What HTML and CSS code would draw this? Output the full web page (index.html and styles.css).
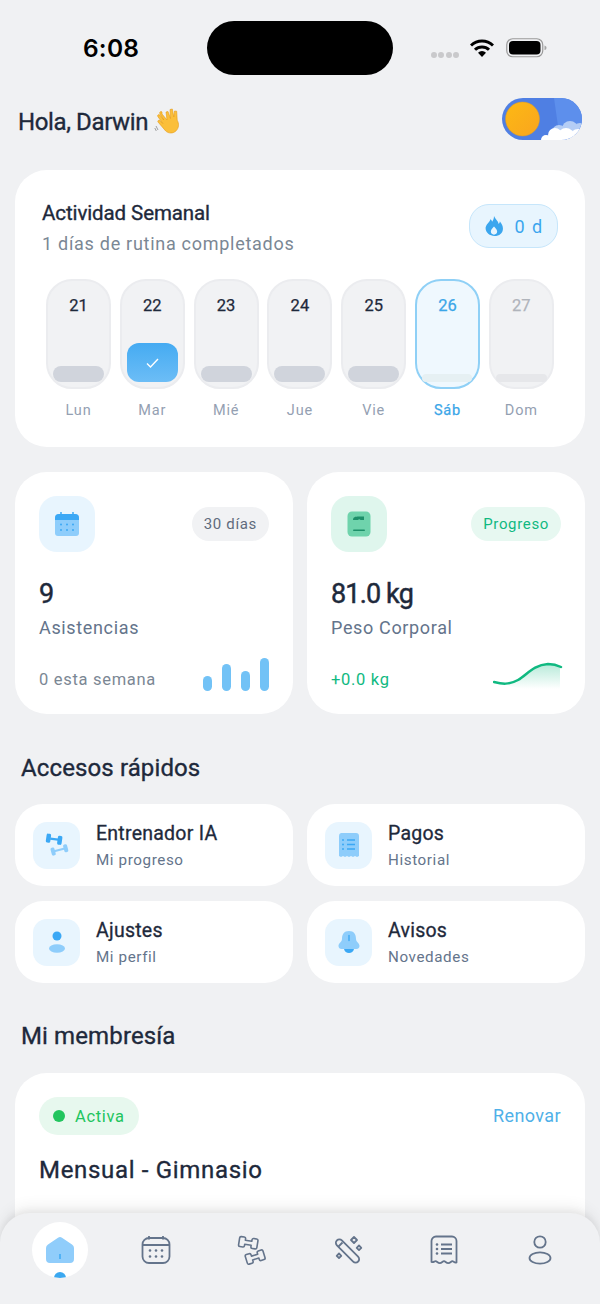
FILE: index.html
```html
<!DOCTYPE html>
<html lang="es">
<head>
<meta charset="utf-8">
<title>Inicio</title>
<link rel="stylesheet" href="styles.css">
</head>
<body>
<div class="screen">
  <div class="island"></div>
  <div class="status">
    <span class="time">6:08</span>
    <div class="status-right">
      <div class="signal"><i></i><i></i><i></i><i></i></div>
      <svg class="wifi" width="24" height="18" viewBox="0 0 24 18"><path d="M1 6.500a16 16 0 0 1 22 0" fill="none" stroke="#000" stroke-width="3"/><path d="M5 10.800a10 10 0 0 1 14 0" fill="none" stroke="#000" stroke-width="3"/><path d="M12 18l-4-4.300a5.800 5.800 0 0 1 8 0z" fill="#000"/></svg>
      <svg class="battery" width="41" height="20" viewBox="0 0 41 20"><rect x=".75" y=".75" width="36" height="18" rx="6" fill="none" stroke="#9a9a9a" stroke-width="1.200"/><rect x="3" y="3" width="31.500" height="13.500" rx="4" fill="#000"/><path d="M38.500 7.500c1.500.4 2 1.300 2 2.300s-.5 1.900-2 2.300z" fill="#a5a5a5"/></svg>
    </div>
  </div>

  <header class="top">
    <h1 class="hello">Hola, Darwin
      <svg class="wave" width="27" height="27" viewBox="0 0 27 27"><path d="M8 7l5 6-1-8 2-.5 2.500 7L16 2.500l2.300-.5 1.500 8 .7-6 2.200.2.500 9c2 3.500 1.800 7.500-1 10.500-3 3-7.500 3-10.500.3L4 15c-.7-1 .7-2.400 1.800-1.500l3 3-5-7c-.8-1.200 1-2.600 2-1.500l4 5-4-6.500C5.200 5 7 3.800 8 5z" fill="#fbbf3a" stroke="#e49a18" stroke-width=".6"/><path d="M2 19l2 4M.8 21l1.500 3" stroke="#8a8a8a" stroke-width=".8"/></svg>
    </h1>
    <svg class="toggle" width="80" height="42" viewBox="0 0 80 42">
      <defs>
        <clipPath id="tc"><rect width="80" height="42" rx="21"/></clipPath>
        <linearGradient id="sun" x1="0" y1="0" x2="1" y2="1"><stop offset="0" stop-color="#fdb913"/><stop offset="1" stop-color="#f9a51f"/></linearGradient>
      </defs>
      <g clip-path="url(#tc)">
        <rect width="80" height="42" fill="#4f7fe3"/>
        <path d="M52 0h28v42H58z" fill="#5d8fec"/>
        <circle cx="57" cy="34" r="7" fill="#b4cdf5"/>
        <circle cx="68" cy="31" r="8" fill="#b4cdf5"/>
        <circle cx="78" cy="32" r="7" fill="#b4cdf5"/>
        <circle cx="44" cy="42" r="5" fill="#fff"/>
        <circle cx="53" cy="37" r="7" fill="#fff"/>
        <circle cx="64" cy="38" r="8" fill="#fff"/>
        <circle cx="76" cy="39" r="8" fill="#fff"/>
      </g>
      <circle cx="20.500" cy="21" r="17" fill="url(#sun)" stroke="#d99a2a" stroke-width=".5"/>
    </svg>
  </header>

  <section class="card week">
    <div class="week-head">
      <div>
        <h2 class="week-title">Actividad Semanal</h2>
        <p class="week-sub">1 días de rutina completados</p>
      </div>
      <div class="streak">
        <svg width="18" height="20" viewBox="0 0 17 19"><path d="M8.500 0c1 3 4 4.500 4.500 7.500.7-.6 1-1.500 1-2.500 2 2.500 3 4.500 3 7 0 4-3.500 7-8 7s-8.500-3-8.500-7.500C.5 8 4.500 6 5 3c1 .5 1.500 1.500 1.700 2.500C7.800 4 8.500 2.200 8.500 0z" fill="#3ba6ee"/><path d="M8.500 10c1 1.500 3 2.500 3 4.800 0 1.800-1.300 2.900-3 2.900s-3-1.100-3-2.900c0-2.300 2-3.300 3-4.800z" fill="#e8f5fe"/></svg>
        <span>0 d</span>
      </div>
    </div>
    <div class="days">
      <div class="day"><div class="pill"><span class="num">21</span><span class="bar"></span></div><span class="lbl">Lun</span></div>
      <div class="day"><div class="pill"><span class="num">22</span><span class="done"><svg width="13" height="10" viewBox="0 0 13 10"><path d="M1 5.500l3.500 3.500L12 1" fill="none" stroke="#fff" stroke-width="1.400"/></svg></span></div><span class="lbl">Mar</span></div>
      <div class="day"><div class="pill"><span class="num">23</span><span class="bar"></span></div><span class="lbl">Mié</span></div>
      <div class="day"><div class="pill"><span class="num">24</span><span class="bar"></span></div><span class="lbl">Jue</span></div>
      <div class="day"><div class="pill"><span class="num">25</span><span class="bar"></span></div><span class="lbl">Vie</span></div>
      <div class="day today"><div class="pill"><span class="num">26</span><span class="bar"></span></div><span class="lbl">Sáb</span></div>
      <div class="day future"><div class="pill"><span class="num">27</span><span class="bar"></span></div><span class="lbl">Dom</span></div>
    </div>
  </section>

  <section class="stats">
    <article class="card stat">
      <div class="stat-top">
        <div class="stat-icon blue">
          <svg width="26" height="26" viewBox="0 0 26 26"><path d="M1 7a4 4 0 0 1 4-4h16a4 4 0 0 1 4 4v15a3 3 0 0 1-3 3H4a3 3 0 0 1-3-3z" fill="#8ecdfb"/><path d="M1 9V7a4 4 0 0 1 4-4h16a4 4 0 0 1 4 4v2z" fill="#3ba8f5"/><path d="M7 1v3M19 1v3" stroke="#3ba8f5" stroke-width="1.500"/><g fill="#3ba8f5"><circle cx="7" cy="13.500" r="1"/><circle cx="13" cy="13.500" r="1"/><circle cx="19" cy="13.500" r="1"/><circle cx="7" cy="19" r="1"/><circle cx="13" cy="19" r="1"/><circle cx="19" cy="19" r="1"/></g></svg>
        </div>
        <span class="tag gray">30 días</span>
      </div>
      <div class="stat-val">9</div>
      <div class="stat-name">Asistencias</div>
      <div class="stat-foot">
        <span class="foot-txt">0 esta semana</span>
        <div class="mini-bars"><i class="h15"></i><i class="h27"></i><i class="h20"></i><i class="h33"></i></div>
      </div>
    </article>
    <article class="card stat">
      <div class="stat-top">
        <div class="stat-icon green">
          <svg width="24" height="26" viewBox="0 0 24 26"><rect width="23" height="25" x=".5" y=".5" rx="4.500" fill="#6fd3ac"/><path d="M6 9c0-3 2-3.500 6-3.500h5V9h-3.500c-.5-1-2-1-2.500 0z" fill="#1d8f69"/><rect x="6" y="18.500" width="12" height="1.600" rx=".8" fill="#1d8f69"/></svg>
        </div>
        <span class="tag mint">Progreso</span>
      </div>
      <div class="stat-val kg">81.0 kg</div>
      <div class="stat-name">Peso Corporal</div>
      <div class="stat-foot">
        <span class="foot-txt up">+0.0 kg</span>
        <svg class="spark" width="70" height="30" viewBox="0 0 70 30">
          <defs><linearGradient id="sg" x1="0" y1="0" x2="0" y2="1"><stop offset="0" stop-color="#10b981" stop-opacity=".3"/><stop offset="1" stop-color="#10b981" stop-opacity="0"/></linearGradient></defs>
          <path d="M1 21c8 2 15 3 24-2s15-15 30-16c5 0 9 1 12 2v23H30z" fill="url(#sg)"/>
          <path d="M1 21c8 2 15 3 24-2s15-15 30-16c5 0 9 1 13 3" fill="none" stroke="#10b981" stroke-width="2.500" stroke-linecap="round"/>
        </svg>
      </div>
    </article>
  </section>

  <h2 class="section-title">Accesos rápidos</h2>
  <section class="quick">
    <a class="card q">
      <span class="q-icon"><svg width="24" height="24" viewBox="0 0 24 24"><g fill="#8ecdfb" transform="rotate(-15 16 17)"><rect x="6" y="12.500" width="4" height="8" rx="1.500"/><rect x="19" y="12.500" width="4" height="8" rx="1.500"/><rect x="9" y="15.500" width="11" height="2"/></g><g fill="#3ba8f5" transform="rotate(8 9 7)"><rect x="1" y="1.500" width="4.500" height="9" rx="1.500"/><rect x="12.500" y="2" width="4.500" height="9" rx="1.500"/><rect x="5" y="5" width="8" height="2.200"/></g></svg></span>
      <span class="q-text"><b>Entrenador IA</b><small>Mi progreso</small></span>
    </a>
    <a class="card q">
      <span class="q-icon"><svg width="24" height="26" viewBox="0 0 24 26"><path d="M3 1h16a3 3 0 0 1 3 3v20l-2 1-2-1-2 1-2-1-2 1-2-1-2 1-2-1-2 1-2-1V4a3 3 0 0 1 2-3z" fill="#8ecdfb"/><path d="M10 8h8M10 12.500h8M10 17h8" stroke="#3ba8f5" stroke-width="1.500"/><g fill="#3ba8f5"><circle cx="6" cy="8" r="1"/><circle cx="6" cy="12.500" r="1"/><circle cx="6" cy="17" r="1"/></g></svg></span>
      <span class="q-text"><b>Pagos</b><small>Historial</small></span>
    </a>
    <a class="card q">
      <span class="q-icon"><svg width="18" height="24" viewBox="0 0 18 24"><circle cx="9" cy="6" r="4.500" fill="#3ba8f5"/><ellipse cx="9" cy="18.500" rx="8" ry="4.200" fill="#8ecdfb"/></svg></span>
      <span class="q-text"><b>Ajustes</b><small>Mi perfil</small></span>
    </a>
    <a class="card q">
      <span class="q-icon"><svg width="22" height="24" viewBox="0 0 22 24"><path d="M11 1c5 0 7 3.500 7 8 0 3 3.500 4 3.500 7 0 2-1.500 3-3 3H3.500C2 19 .5 18 .5 16c0-3 3.500-4 3.500-7 0-4.500 2-8 7-8z" fill="#8ecdfb"/><path d="M6 19h10c-.6 2.500-2.500 4-5 4s-4.400-1.500-5-4z" fill="#3ba8f5"/><path d="M11 5.500v5" stroke="#3ba8f5" stroke-width="1.400" stroke-linecap="round"/></svg></span>
      <span class="q-text"><b>Avisos</b><small>Novedades</small></span>
    </a>
  </section>

  <h2 class="section-title second">Mi membresía</h2>
  <section class="card member">
    <div class="member-top">
      <span class="active"><i></i>Activa</span>
      <a class="renew">Renovar</a>
    </div>
    <h3 class="plan">Mensual - Gimnasio</h3>
  </section>

  <nav class="nav">
    <div class="nav-item home">
      <svg width="28" height="26" viewBox="0 0 28 26"><path d="M12 .8a3.500 3.500 0 0 1 4 0l10 6.700A4 4 0 0 1 28 11v11a4 4 0 0 1-4 4H4a4 4 0 0 1-4-4V11a4 4 0 0 1 2-3.500z" fill="#90cdfb"/><path d="M14 17v5" stroke="#3ba8f5" stroke-width="1.500"/></svg>
      <span class="dot"></span>
    </div>
    <div class="nav-item">
      <svg width="30" height="30" viewBox="0 0 30 30" fill="none" stroke="#64748b" stroke-width="1.800"><rect x="1.500" y="3" width="27" height="25" rx="6.500"/><path d="M1.500 10h27M8 1v3.500M22 1v3.500"/><g fill="#64748b" stroke="none"><circle cx="9" cy="15.500" r="1.300"/><circle cx="15" cy="15.500" r="1.300"/><circle cx="21" cy="15.500" r="1.300"/><circle cx="9" cy="21.500" r="1.300"/><circle cx="15" cy="21.500" r="1.300"/><circle cx="21" cy="21.500" r="1.300"/></g></svg>
    </div>
    <div class="nav-item">
      <svg width="30" height="30" viewBox="0 0 30 30" fill="none" stroke="#64748b" stroke-width="1.600" stroke-linejoin="round"><path transform="translate(11.500 7.800) rotate(9)" d="M-9.500-3.500a1.500 1.500 0 0 1 1.500-1.500h3a1.500 1.500 0 0 1 1.500 1.500v1.500h6.500v-1.500a1.500 1.500 0 0 1 1.500-1.500h3a1.500 1.500 0 0 1 1.500 1.500v7a1.500 1.500 0 0 1-1.500 1.500h-3a1.500 1.500 0 0 1-1.500-1.500v-1.500h-6.500v1.500a1.500 1.500 0 0 1-1.500 1.500h-3a1.500 1.500 0 0 1-1.500-1.500z"/><path transform="translate(18.400 22) rotate(-17)" d="M-9.500-3.500a1.500 1.500 0 0 1 1.500-1.500h3a1.500 1.500 0 0 1 1.500 1.500v1.500h6.500v-1.500a1.500 1.500 0 0 1 1.500-1.500h3a1.500 1.500 0 0 1 1.500 1.500v7a1.500 1.500 0 0 1-1.500 1.500h-3a1.500 1.500 0 0 1-1.500-1.500v-1.500h-6.500v1.500a1.500 1.500 0 0 1-1.500 1.500h-3a1.500 1.500 0 0 1-1.500-1.500z"/></svg>
    </div>
    <div class="nav-item">
      <svg width="30" height="30" viewBox="0 0 30 30" fill="none" stroke="#64748b" stroke-width="1.800" stroke-linejoin="round"><rect x="-3.500" y="-15" width="7" height="30" rx="3.500" transform="translate(14.500 16) rotate(-45)"/><path d="M5 12l4.500-4.500M21 2l3 3-3 3-3-3zM26 10.500l2.300 2.300-2.300 2.300-2.300-2.300zM6 18.500l2.300 2.300L6 23l-2.300-2.200z"/></svg>
    </div>
    <div class="nav-item">
      <svg width="28" height="30" viewBox="0 0 28 30" fill="none" stroke="#64748b" stroke-width="1.800" stroke-linejoin="round"><path d="M1.500 27V6a4.500 4.500 0 0 1 4.500-4.500h16A4.500 4.500 0 0 1 26.500 6v21.500c-2 .8-3-1.300-4.200-1.300s-2 2-4.100 2-2.800-2-4.200-2-2.200 2-4.200 2-2.900-2-4.200-2-2.100 1.500-4.100.8z"/><path d="M11 9.500h11M11 14h11M11 18.500h11"/><g fill="#64748b" stroke="none"><circle cx="7" cy="9.500" r="1.300"/><circle cx="7" cy="14" r="1.300"/><circle cx="7" cy="18.500" r="1.300"/></g></svg>
    </div>
    <div class="nav-item">
      <svg width="24" height="30" viewBox="0 0 24 30" fill="none" stroke="#64748b" stroke-width="1.800"><circle cx="12" cy="7" r="5.700"/><ellipse cx="12" cy="23" rx="10.500" ry="5.700"/></svg>
    </div>
  </nav>
</div>
</body>
</html>
```
FILE: styles.css
```css
* { box-sizing: border-box; margin: 0; padding: 0; }
html, body { width: 600px; height: 1304px; overflow: hidden; }
body { background: #f0f1f3; font-family: Roboto, "Noto Sans", sans-serif; color: #1e293b; }
.screen { position: relative; width: 600px; height: 1304px; overflow: hidden; padding: 0 15px; }

.island { position: absolute; left: 207px; top: 21px; width: 186px; height: 54px; border-radius: 27px; background: #000; }
.status { height: 98px; display: flex; justify-content: space-between; padding: 33px 38px 0 68px; }
.time { font-family: Inter, sans-serif; font-weight: 600; font-size: 24.500px; line-height: 30px; color: #000; letter-spacing: .2px; }
.status-right { display: flex; align-items: center; height: 30px; }
.signal { display: flex; gap: 1.500px; margin: 13px 0 0 0; }
.signal i { width: 6px; height: 6px; border-radius: 50%; background: #c9c9cb; }
.wifi { margin-left: 11px; }
.battery { margin-left: 12px; }

.top { display: flex; justify-content: space-between; align-items: center; height: 42px; padding: 0 3px; margin-bottom: 30px; }
.hello { display: flex; align-items: center; gap: 6px; font-size: 24px; font-weight: 400; -webkit-text-stroke: .35px currentColor; letter-spacing: -.38px; color: #1e293b; margin-top: 5px; }
.wave { display: block; margin-top: -2px; }
.toggle { display: block; margin-right: 0; }

.card { background: #fff; border-radius: 32px; }

.week { height: 277px; padding: 32px 27px 0; margin-bottom: 25px; }
.week-head { display: flex; justify-content: space-between; align-items: flex-start; height: 77px; }
.week-title { font-size: 20.500px; line-height: 22px; font-weight: 400; -webkit-text-stroke: .35px currentColor; letter-spacing: -.1px; color: #1e293b; }
.week-sub { font-size: 18px; line-height: 22px; margin-top: 9px; letter-spacing: .72px; color: #7b8794; }
.streak { display: flex; align-items: center; justify-content: center; gap: 11px; width: 89px; height: 44px; margin-top: 2px; padding-left: 2px; border-radius: 20px; background: #e8f5fe; border: 1.500px solid #c6e6fb; color: #3ba6ee; font-size: 18px; letter-spacing: 1.500px; }

.days { display: flex; gap: 8.800px; padding: 0 4px; }
.day { width: 65px; display: flex; flex-direction: column; align-items: center; }
.pill { width: 65px; height: 110px; display: flex; flex-direction: column; align-items: center; justify-content: space-between; padding: 15px 6px 5px; border-radius: 26px; background: #f1f2f4; border: 2px solid #ebecef; }
.num { font-size: 16.500px; line-height: 20px; font-weight: 400; -webkit-text-stroke: .25px currentColor; color: #1e293b; }
.bar { width: 51px; height: 16px; border-radius: 8px; background: #d0d4dc; }
.done { width: 51px; height: 39px; border-radius: 12px; background: linear-gradient(#45abf2, #6cbdf6); display: flex; align-items: center; justify-content: center; }
.lbl { margin-top: 12px; padding-top: 1px; font-size: 14.500px; line-height: 18px; letter-spacing: .8px; color: #94a0b2; }
.today .pill { background: #eff8fe; border-color: #8fd0f6; }
.today .num { color: #3ba6e8; }
.today .bar { width: 50px; height: 8px; border-radius: 4px; background: #e6f0f3; }
.today .lbl { color: #3ba6e8; -webkit-text-stroke: .25px currentColor; }
.future .num { color: #b0b4bb; }
.future .bar { height: 8px; border-radius: 4px; background: #e6e7ea; }

.stats { display: grid; grid-template-columns: 278px 278px; gap: 14px; }
.stat { height: 242px; padding: 24px 24px 0; }
.stat-top { display: flex; justify-content: space-between; align-items: center; height: 56px; }
.stat-icon { width: 56px; height: 56px; border-radius: 18px; display: flex; align-items: center; justify-content: center; }
.stat-icon.blue { background: #e8f5fe; }
.stat-icon.green { background: #dff6ed; }
.tag { height: 34px; padding: 0 12px; display: flex; align-items: center; border-radius: 17px; font-size: 15px; letter-spacing: .65px; }
.tag.gray { background: #f1f2f4; color: #5f6b7c; }
.tag.mint { background: #e7f8f1; color: #10b981; }
.stat-val { margin-top: 25px; font-size: 27px; line-height: 34px; font-weight: 400; -webkit-text-stroke: .45px currentColor; color: #1e293b; }
.stat-val.kg { letter-spacing: -.85px; }
.stat-name { margin-top: 5px; font-size: 18px; line-height: 24px; letter-spacing: .65px; color: #64748b; }
.stat-foot { display: flex; justify-content: space-between; align-items: flex-end; height: 34px; margin-top: 17px; }
.foot-txt { font-size: 16.500px; line-height: 24px; letter-spacing: .7px; color: #7b8794; margin-bottom: -1px; }
.foot-txt.up { color: #10b981; }
.mini-bars { display: flex; align-items: flex-end; gap: 10px; }
.mini-bars i { width: 9px; border-radius: 5px; background: #72c2f6; }
.h15 { height: 15px; }
.h20 { height: 20px; }
.h27 { height: 27px; }
.h33 { height: 33px; }
.spark { display: block; margin-right: -2px; }

.section-title { margin: 36px 6px 18px; font-size: 24px; line-height: 36px; font-weight: 400; -webkit-text-stroke: .35px currentColor; letter-spacing: .12px; color: #1e293b; }
.section-title.second { margin-top: 35px; margin-bottom: 19px; }
.quick { display: grid; grid-template-columns: 278px 278px; gap: 15px 14px; }
.q { height: 82px; border-radius: 28px; display: flex; align-items: center; padding: 0 18px; gap: 16px; }
.q-icon { width: 47px; height: 47px; border-radius: 14px; background: #e8f5fe; display: flex; align-items: center; justify-content: center; flex: none; }
.q-text { display: flex; flex-direction: column; margin-top: 1px; }
.q-text b { font-size: 19.500px; line-height: 24px; font-weight: 400; -webkit-text-stroke: .3px currentColor; color: #1e293b; letter-spacing: .25px; }
.q-text small { margin-top: 4px; font-size: 15.200px; line-height: 20px; letter-spacing: .6px; color: #64748b; }

.member { height: 220px; padding: 24px 24px 0; }
.member-top { display: flex; justify-content: space-between; align-items: center; height: 38px; }
.active { display: flex; align-items: center; gap: 10px; height: 38px; padding: 0 14px; border-radius: 19px; background: #e7f8ee; color: #22c55e; font-size: 16.500px; letter-spacing: .65px; }
.active i { width: 12px; height: 12px; border-radius: 50%; background: #22c55e; }
.renew { font-size: 18px; letter-spacing: .4px; color: #4fb0e8; margin-bottom: 2px; }
.plan { margin-top: 18px; font-size: 24px; line-height: 34px; font-weight: 400; -webkit-text-stroke: .35px currentColor; letter-spacing: .68px; color: #1e293b; }

.nav { position: absolute; left: 0; right: 0; bottom: 0; height: 91px; padding: 9px 12px 0; display: flex; align-items: flex-start; background: #f0f1f3; border-radius: 30px 30px 0 0; box-shadow: 0 -3px 6px rgba(0, 0, 0, .06), 0 -8px 14px rgba(0, 0, 0, .05); }
.nav-item { position: relative; width: 96px; height: 56px; display: flex; align-items: center; justify-content: center; }
.nav-item.home { width: 56px; margin: 0 20px; border-radius: 50%; background: #fff; overflow: hidden; }
.dot { position: absolute; left: 22px; top: 50px; width: 12px; height: 12px; border-radius: 50%; background: #3ba8f0; }
```
